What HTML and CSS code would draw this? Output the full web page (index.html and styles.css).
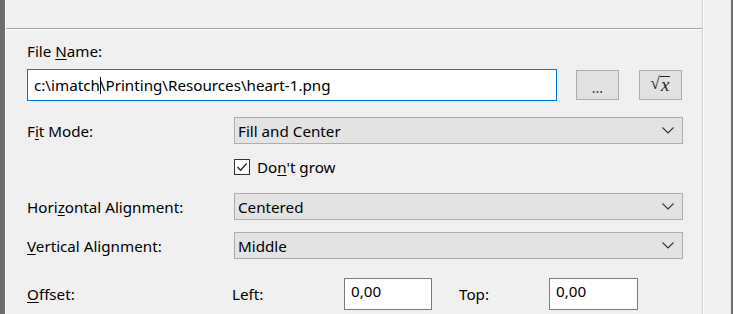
FILE: index.html
```html
<!DOCTYPE html>
<html>
<head>
<meta charset="utf-8">
<link rel="stylesheet" href="styles.css">
</head>
<body>
<div class="app">
  <div class="lbar"></div>
  <div class="lline"></div>
  <div class="main">
    <div class="top"></div>
    <div class="form">
      <div class="label">File <u>N</u>ame:</div>
      <div class="file-row">
        <div class="textbox focus">c:\imatch<span class="caret"></span>\Printing\Resources\heart-1.png</div>
        <div class="btn dots">...</div>
        <div class="btn sqrt"><span class="rad">√</span><span class="radx">x</span></div>
      </div>
      <div class="row fit">
        <div class="label col">F<u>i</u>t Mode:</div>
        <div class="combo"><span>Fill and Center</span><svg class="chev" width="12" height="7" viewBox="0 0 12 7"><path d="M0.5 0.5 L6 6 L11.5 0.5" fill="none" stroke="#333" stroke-width="1.1"/></svg></div>
      </div>
      <div class="row check-row">
        <div class="col"></div>
        <div class="check"><svg width="14" height="14" viewBox="0 0 14 14"><path d="M2.5 7 L5.6 10.2 L11.6 3.5" fill="none" stroke="#222" stroke-width="1.3"/></svg></div>
        <div class="label">Do<u>n</u>'t grow</div>
      </div>
      <div class="row halign">
        <div class="label col">Hori<u>z</u>ontal Alignment:</div>
        <div class="combo"><span>Centered</span><svg class="chev" width="12" height="7" viewBox="0 0 12 7"><path d="M0.5 0.5 L6 6 L11.5 0.5" fill="none" stroke="#333" stroke-width="1.1"/></svg></div>
      </div>
      <div class="row valign">
        <div class="label col"><u>V</u>ertical Alignment:</div>
        <div class="combo"><span>Middle</span><svg class="chev" width="12" height="7" viewBox="0 0 12 7"><path d="M0.5 0.5 L6 6 L11.5 0.5" fill="none" stroke="#333" stroke-width="1.1"/></svg></div>
      </div>
      <div class="row offset">
        <div class="label ocol"><u>O</u>ffset:</div>
        <div class="label leftcol">Left:</div>
        <div class="numbox left">0,00</div>
        <div class="label topcol">Top:</div>
        <div class="numbox">0,00</div>
      </div>
    </div>
  </div>
  <div class="rline"></div>
  <div class="rpanel"></div>
  <div class="rbar"></div>
</div>
</body>
</html>
```

FILE: styles.css
```css
html, body {
  margin: 0;
  padding: 0;
  background: #f0f0f0;
  font-family: "Noto Sans", "Open Sans", sans-serif;
  font-size: 15.2px;
  color: #000;
  overflow: hidden;
}

.app {
  display: flex;
  width: 733px;
  height: 314px;
}

.lbar {
  width: 5px;
  background: #6e6e6e;
}

.lline {
  width: 1px;
  background: #ffffff;
}

.main {
  width: 696px;
  display: flex;
  flex-direction: column;
}

.top {
  height: 28px;
  border-bottom: 1px solid #a0a0a0;
}

.form {
  border-top: 1px solid #ffffff;
  padding: 11px 0 0 21px;
  display: flex;
  flex-direction: column;
}

.label {
  height: 20px;
  line-height: 20px;
  white-space: nowrap;
}

u {
  text-decoration: underline;
  text-underline-offset: 2px;
}

.file-row {
  display: flex;
  align-items: flex-start;
  margin-top: 8px;
}

.textbox {
  box-sizing: border-box;
  width: 530px;
  height: 32px;
  border: 1px solid #0078d7;
  background: #fff;
  padding: 0 0 0 6px;
  line-height: 30px;
  white-space: nowrap;
}

.caret {
  display: inline-block;
  width: 1px;
  height: 17px;
  background: #000;
  vertical-align: -3px;
  margin-right: -1px;
}

.btn {
  box-sizing: border-box;
  width: 43px;
  height: 30px;
  margin-top: 1px;
  background: #e1e1e1;
  border: 1px solid #adadad;
  display: flex;
  align-items: center;
  justify-content: center;
  color: #333;
}

.dots {
  margin-left: 19px;
  padding-top: 5px;
  font-size: 14px;
}

.sqrt {
  margin-left: 20px;
  font-family: "Liberation Serif", "DejaVu Serif", serif;
  font-size: 19px;
  color: #222;
  padding-bottom: 2px;
}

.rad {
  font-size: 17px;
}

.radx {
  font-style: italic;
  border-top: 1px solid #222;
  line-height: 15px;
  padding: 0 1px;
}

.row {
  display: flex;
  align-items: center;
}

.col {
  width: 207px;
  flex: none;
}

.combo {
  box-sizing: border-box;
  width: 449px;
  height: 27px;
  background: #e3e3e3;
  border: 1px solid #adadad;
  display: flex;
  align-items: center;
  justify-content: space-between;
  padding: 0 8px 0 3px;
}

.fit {
  margin-top: 16px;
}

.check-row {
  margin-top: 14px;
  height: 18px;
}

.check {
  box-sizing: border-box;
  width: 16px;
  height: 16px;
  border: 1px solid #333;
  background: #fff;
  display: flex;
  align-items: center;
  justify-content: center;
  margin-right: 7px;
}

.halign {
  margin-top: 17px;
}

.valign {
  margin-top: 12px;
}

.offset {
  margin-top: 19px;
}

.ocol {
  width: 205px;
}

.leftcol {
  width: 112px;
}

.topcol {
  width: 90px;
  margin-left: 27px;
}

.numbox {
  box-sizing: border-box;
  width: 89px;
  height: 32px;
  border: 1px solid #7a7a7a;
  background: #fff;
  padding: 2px 0 0 6px;
  line-height: 20px;
}

.numbox.left {
  width: 88px;
}

.rline {
  width: 1px;
  background: #d0d0d0;
  border-right: 1px solid #ffffff;
}

.rpanel {
  width: 27px;
}

.rbar {
  width: 2px;
  background: #6e6e6e;
}
```
